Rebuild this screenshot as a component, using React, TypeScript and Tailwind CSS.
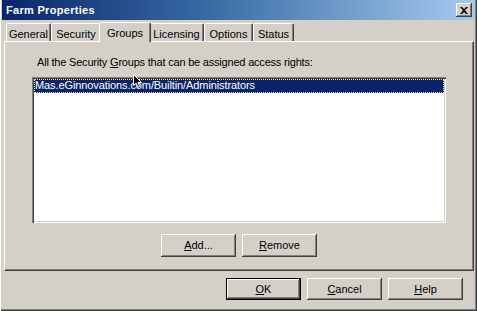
import React from 'react';

const raised =
  'bg-[#d4d0c8] shadow-[inset_-1px_-1px_0_#404040,inset_1px_1px_0_#ffffff,inset_-2px_-2px_0_#808080]';

function Btn({ u, rest, isDefault = false, h = 'h-[23px]' }: { u: string; rest: string; isDefault?: boolean; h?: string }) {
  return (
    <button
      className={`w-[75px] ${h} ${raised} flex items-center justify-center text-[11px] text-black ${isDefault ? 'outline outline-1 outline-black -outline-offset-1 shadow-[inset_-2px_-2px_0_#404040,inset_2px_2px_0_#ffffff,inset_-3px_-3px_0_#808080]' : ''}`}
    >
      <span>
        <span className="underline underline-offset-[1px]">{u}</span>
        {rest}
      </span>
    </button>
  );
}

const tabs = ['General', 'Security', 'Groups', 'Licensing', 'Options', 'Status'];
const tabW: Record<string, string> = {
  General: 'w-[45px]',
  Security: 'w-[50px]',
  Groups: 'w-[52px]',
  Licensing: 'w-[55px]',
  Options: 'w-[49px]',
  Status: 'w-[41px]',
};

export default function App() {
  return (
    <div className="relative w-[477px] h-[311px] overflow-hidden bg-[#d4d0c8] flex flex-col font-['Liberation_Sans',Arial,sans-serif] text-[11px] text-black shadow-[inset_1px_0_0_#ffffff,inset_-1px_-1px_0_#404040,inset_-2px_-2px_0_#808080]">
      {/* title bar */}
      <div className="mx-[2px] h-[20px] flex items-center bg-[linear-gradient(to_right,#0a246a,#3a6ea5_45%,#a6caf0)]">
        <span className="pl-[4px] font-bold text-white text-[11px] tracking-[0.3px]">Farm Properties</span>
        <div className="ml-auto mr-[3px] w-[16px] h-[14px] bg-[#d4d0c8] shadow-[inset_-1px_-1px_0_#404040,inset_1px_1px_0_#ffffff,inset_-2px_-2px_0_#808080] flex items-center justify-center">
          <svg width="8" height="7" viewBox="0 0 8 7">
            <path d="M0 0h2l2 2 2-2h2L5 3.5 8 7H6L4 5 2 7H0l3-3.5z" fill="#000" />
          </svg>
        </div>
      </div>

      {/* tabs */}
      <div className="mt-[1px] h-[20px] flex items-end pl-[6px]">
        {tabs.map((t) => {
          const sel = t === 'Groups';
          return (
            <div
              key={t}
              className={`${tabW[t]} flex items-start justify-center bg-[#d4d0c8] border-t border-l border-white rounded-t-[2px] shadow-[inset_-1px_0_0_#808080] border-r border-r-[#404040] ${
                sel ? 'h-[20px] -mx-[2px] -mb-px relative z-10 pt-[2px]' : 'h-[18px] pt-[2px]'
              }`}
            >
              {t}
            </div>
          );
        })}
      </div>

      {/* panel */}
      <div className="ml-[4px] mr-[3px] h-[230px] border-t border-l border-white border-r border-b border-r-[#404040] border-b-[#404040] shadow-[inset_-1px_-1px_0_#808080] flex flex-col pl-[27px] pt-[14px]">
        <div className="ml-[5px] leading-[13px] tracking-[-0.2px]">
          All the Security <span className="underline underline-offset-[1px]">G</span>roups that can be assigned access rights:
        </div>
        <div className="mt-[8px] w-[414px] h-[146px] bg-white shadow-[inset_1px_1px_0_#808080,inset_2px_2px_0_#404040,inset_-1px_-1px_0_#ffffff,inset_-2px_-2px_0_#d4d0c8] p-[2px]">
          <div className="h-[14px] bg-[#0a246a] text-white leading-[13px] pl-[1px] tracking-[-0.1px] outline outline-1 outline-dotted outline-[#f5db95] -outline-offset-1">
            Mas.eGinnovations.com/Builtin/Administrators
          </div>
        </div>
        <div className="mt-[11px] flex justify-center gap-[6px] pr-[27px]">
          <Btn u="A" rest="dd..." />
          <Btn u="R" rest="emove" />
        </div>
      </div>

      {/* dialog buttons */}
      <div className="mt-[7px] flex justify-end gap-[6px] pr-[14px]">
        <Btn u="O" rest="K" isDefault h="h-[22px]" />
        <Btn u="C" rest="ancel" h="h-[22px]" />
        <Btn u="H" rest="elp" h="h-[22px]" />
      </div>

      {/* mouse pointer */}
      <svg className="absolute left-[133px] top-[74px]" width="10" height="14" viewBox="0 0 10 14">
        <path d="M0.5 0.5v11l2.6-2.4 1.9 4.2 1.7-.8-1.9-4H8.5z" fill="#000" stroke="#fff" strokeWidth="1" />
      </svg>
    </div>
  );
}
